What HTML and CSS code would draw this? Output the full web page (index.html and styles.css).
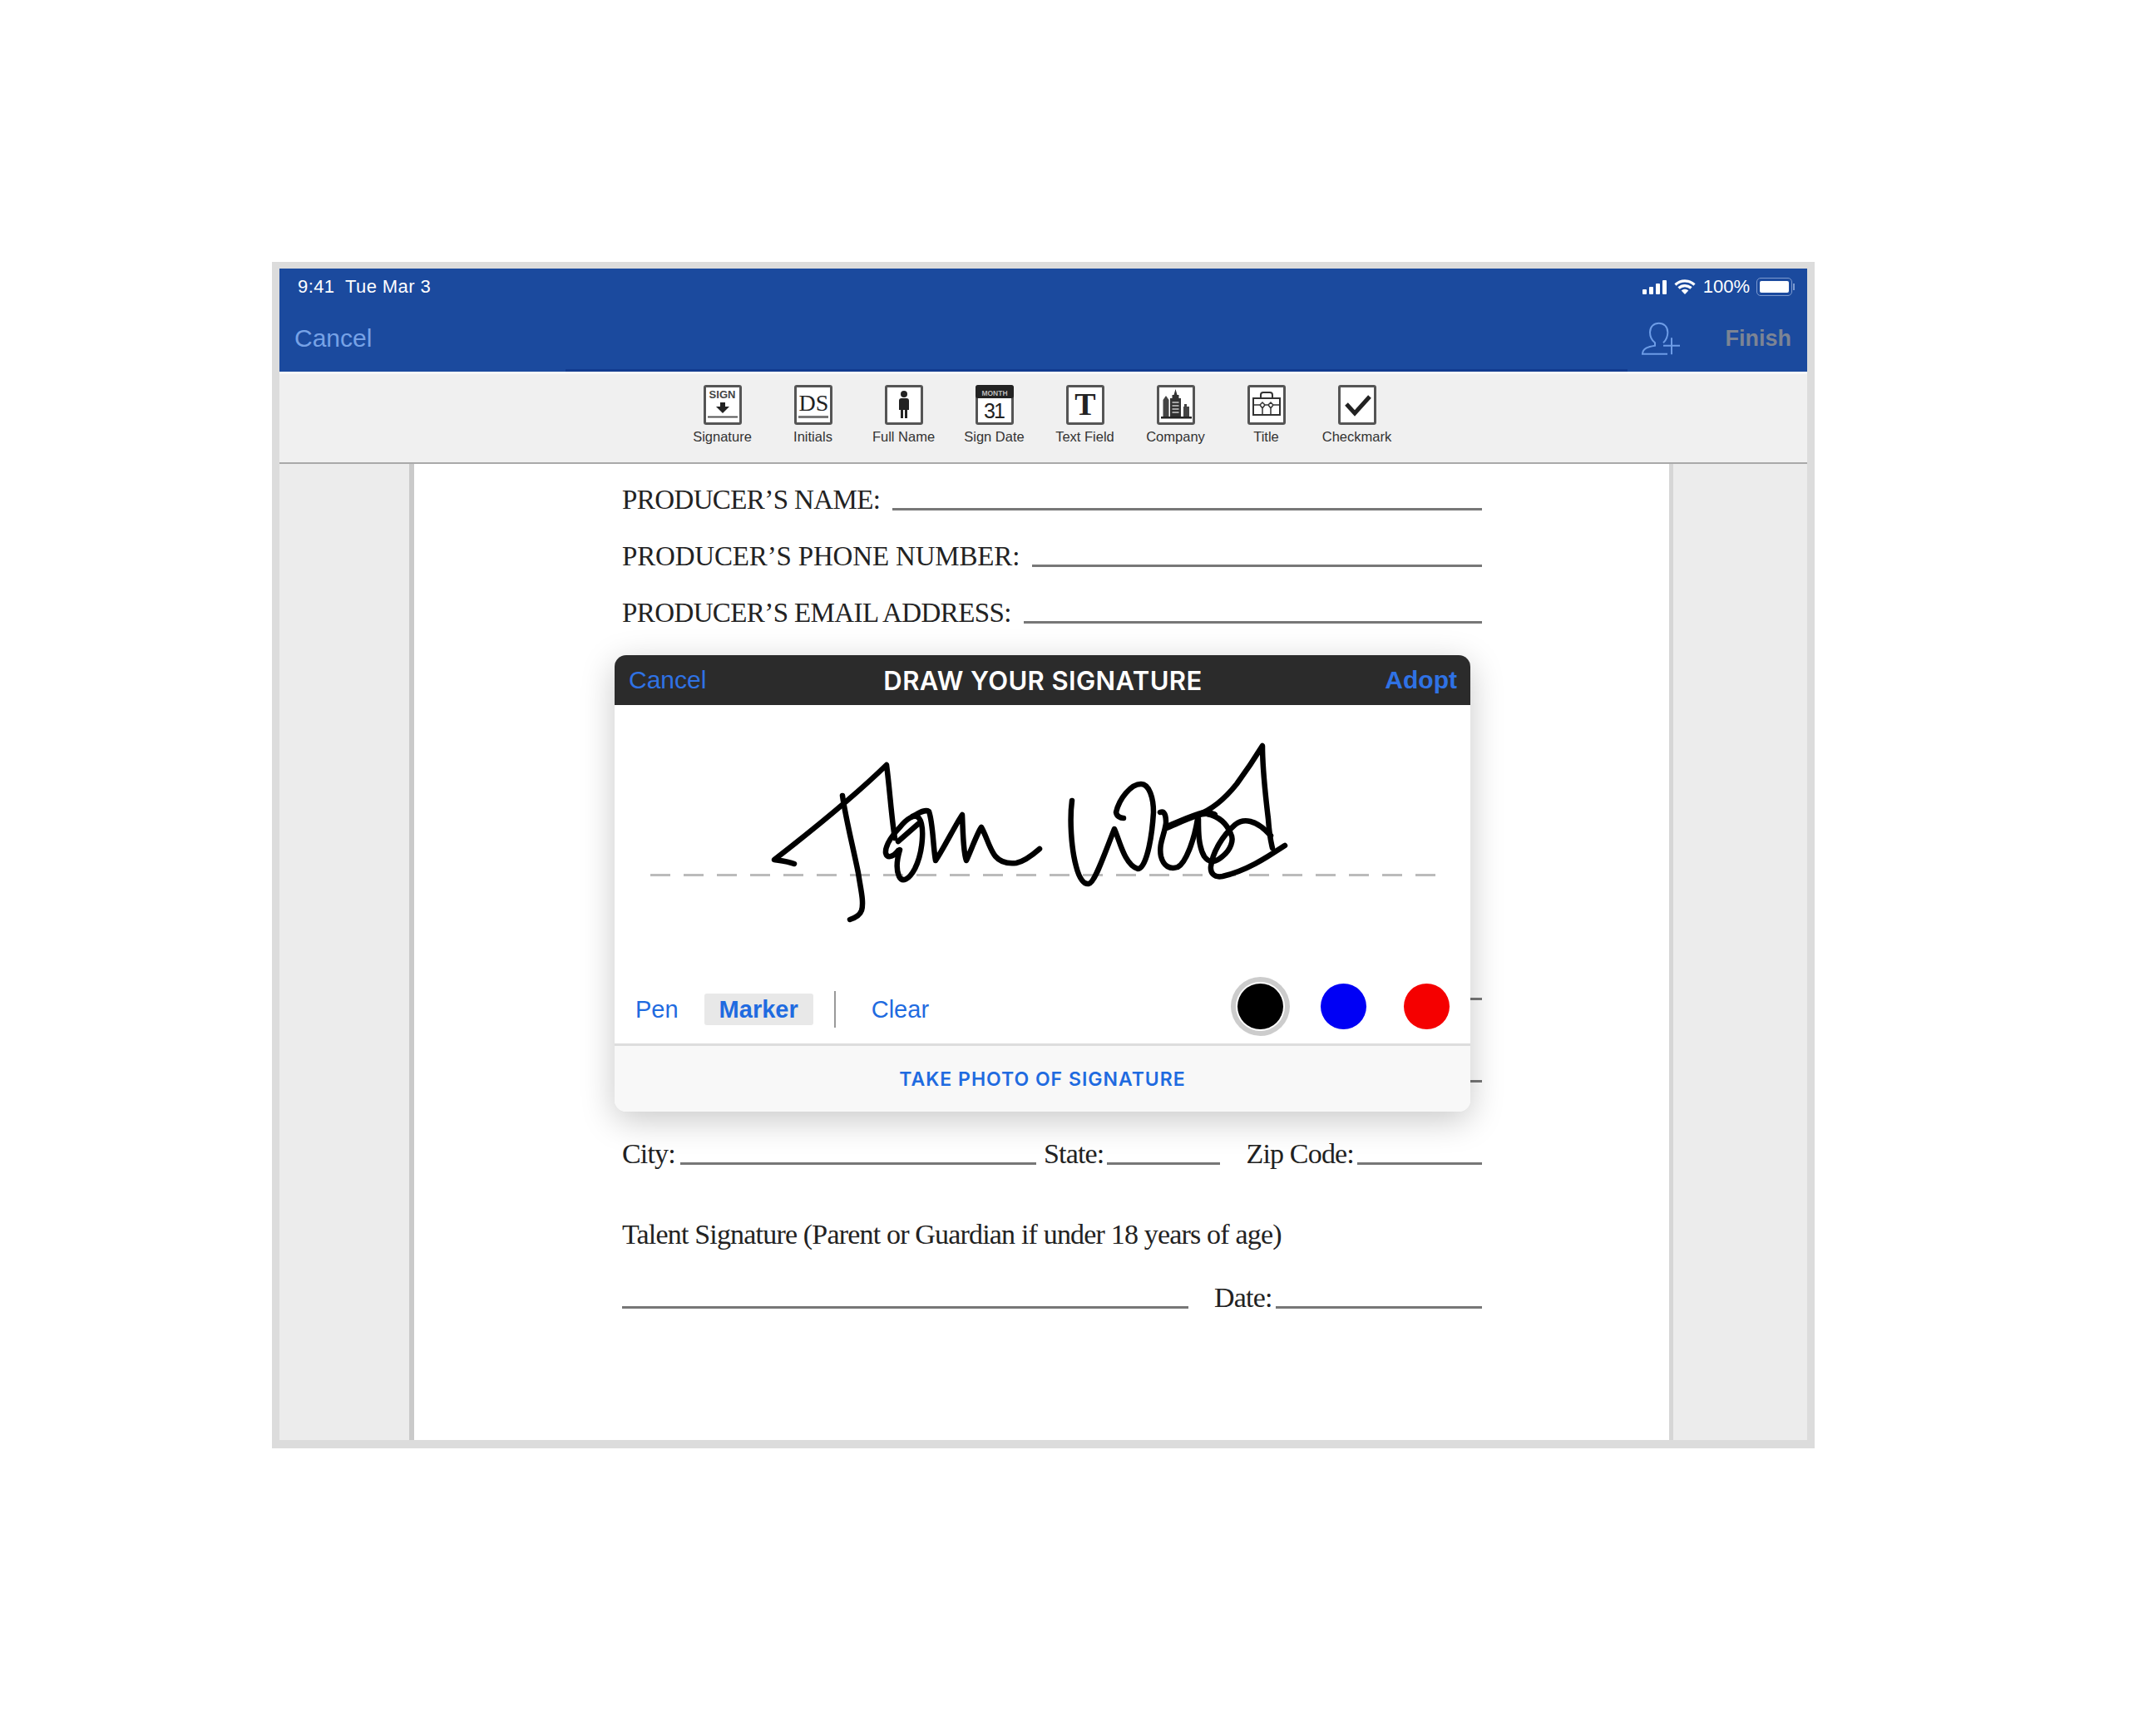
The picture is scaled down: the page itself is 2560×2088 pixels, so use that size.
FILE: index.html
```html
<!DOCTYPE html>
<html lang="en">
<head>
    <meta charset="UTF-8">
    <title>Draw your signature</title>
    <link rel="stylesheet" href="styles.css">
</head>
<body>
    <div class="device">
        <header class="topbar">
            <div class="status">
                <span class="status-time">9:41&nbsp; Tue Mar 3</span>
                <div class="status-right">
                    <svg class="signal" width="31" height="19" viewBox="0 0 31 19">
                        <rect x="1" y="12" width="5" height="6" rx="1"/>
                        <rect x="9" y="9" width="5" height="9" rx="1"/>
                        <rect x="17" y="5" width="5" height="13" rx="1"/>
                        <rect x="25" y="1" width="5" height="17" rx="1"/>
                    </svg>
                    <svg class="wifi" width="26" height="20" viewBox="0 0 26 20">
                        <path d="M1.5 7.5a16.5 16.5 0 0 1 23 0M5.5 11.5a11 11 0 0 1 15 0" fill="none" stroke="#fff" stroke-width="3.2"/>
                        <path d="M8.7 14.6a6.2 6.2 0 0 1 8.6 0L13 19z" fill="#fff"/>
                    </svg>
                    <span class="status-pct">100%</span>
                    <div class="battery"><div class="battery-fill"></div></div>
                </div>
            </div>
            <div class="nav">
                <span class="nav-cancel">Cancel</span>
                <div class="nav-right">
                    <svg class="add-user" width="52" height="44" viewBox="810 246 156 132">
                        <path d="M915 368H825C826 348 845 342 870 338V328C858 318 852 305 852 290C852 270 866 257 884 257C902 257 916 270 916 290C916 305 910 318 900 328M900 338H960M930 310V370"/>
                    </svg>
                    <span class="nav-finish">Finish</span>
                </div>
            </div>
        </header>

        <nav class="toolbar">
            <div class="tool">
                <svg class="tool-icon" viewBox="0 0 46 48">
                    <text x="22.500" y="16" class="i-small">SIGN</text>
                    <path d="M20 21h6v5h5l-8 8-8-8h5z" fill="#222"/>
                    <rect x="5" y="37.500" width="36" height="2" fill="#555"/>
                </svg>
                <span>Signature</span>
            </div>
            <div class="tool">
                <svg class="tool-icon" viewBox="0 0 46 48">
                    <text x="23.500" y="31" class="i-ds">DS</text>
                    <rect x="5" y="37" width="36" height="3" fill="#777"/>
                </svg>
                <span>Initials</span>
            </div>
            <div class="tool">
                <svg class="tool-icon" viewBox="0 0 46 48">
                    <circle cx="23" cy="11" r="4" fill="#222"/>
                    <path d="M17 19q0-3 3-3h6q3 0 3 3v11h-2v10h-3V30h-2v10h-3V30h-2z" fill="#222"/>
                </svg>
                <span>Full Name</span>
            </div>
            <div class="tool">
                <svg class="tool-icon" viewBox="0 0 46 48">
                    <rect x="0" y="0" width="46" height="16" rx="3" fill="#222"/>
                    <text x="23" y="13" class="i-month">MONTH</text>
                    <text x="22" y="40" class="i-day">31</text>
                </svg>
                <span>Sign Date</span>
            </div>
            <div class="tool">
                <svg class="tool-icon" viewBox="0 0 46 48">
                    <text x="23" y="36" class="i-t">T</text>
                </svg>
                <span>Text Field</span>
            </div>
            <div class="tool">
                <svg class="tool-icon" viewBox="0 0 46 48">
                    <path d="M22.500 5l2 7h2v4h2.500v23H16V16h2.500v-4h2z" fill="#333"/>
                    <path d="M11 13l3.500 5v21h-7V18zM33 23h3v3h3v13h-7V26h1z" fill="#444"/>
                    <path d="M18.500 21h8M18.500 25h8M18.500 29h8M18.500 33h8" stroke="#ccc" stroke-width="1.500"/>
                    <rect x="5" y="38" width="37" height="2.500" fill="#222"/>
                </svg>
                <span>Company</span>
            </div>
            <div class="tool">
                <svg class="tool-icon" viewBox="0 0 46 48">
                    <path d="M7 16h32v20H7zM16 16v-4q0-3 3-3h8q3 0 3 3v4" fill="none" stroke="#333" stroke-width="2"/>
                    <path d="M7 24h8M21 24h4M31 24h8M18 28v8M28 28v8M15 24l3-3 3 3-3 4zM25 24l3-3 3 3-3 4z" fill="none" stroke="#333" stroke-width="1.500"/>
                </svg>
                <span>Title</span>
            </div>
            <div class="tool">
                <svg class="tool-icon" viewBox="0 0 46 48">
                    <path d="M10 23l10 11L38 14" fill="none" stroke="#222" stroke-width="5"/>
                </svg>
                <span>Checkmark</span>
            </div>
        </nav>

        <main class="workspace">
            <div class="paper">
                <div class="row"><span class="label caps caps-name">PRODUCER’S NAME:</span><span class="rule"></span></div>
                <div class="row"><span class="label caps caps-phone">PRODUCER’S PHONE NUMBER:</span><span class="rule"></span></div>
                <div class="row row-last-top"><span class="label caps caps-email">PRODUCER’S EMAIL ADDRESS:</span><span class="rule"></span></div>
                <div class="row row-tall"><span class="label">&nbsp;</span><span class="rule"></span></div>
                <div class="row row-tall"><span class="label">&nbsp;</span><span class="rule"></span></div>
                <div class="row row-city">
                    <span class="label">City:</span><span class="rule rule-city"></span>
                    <span class="label">State:</span><span class="rule rule-state"></span>
                    <span class="label">Zip Code:</span><span class="rule rule-end"></span>
                </div>
                <div class="row row-talent"><span class="label">Talent Signature (Parent or Guardian if under 18 years of age)</span></div>
                <div class="row">
                    <span class="rule rule-sign"></span>
                    <span class="label">Date:</span><span class="rule rule-end"></span>
                </div>

                <section class="modal">
                    <div class="modal-head">
                        <span class="modal-cancel">Cancel</span>
                        <span class="modal-title">DRAW YOUR SIGNATURE</span>
                        <span class="modal-adopt">Adopt</span>
                    </div>
                    <div class="pad">
                        <div class="pad-line"></div>
                        <svg class="ink" width="640" height="225" viewBox="920 890 640 225">
                            <path d="M955 1039C948 1036 938 1035 931 1034C975 1000 1030 955 1066 920C1070 950 1072 985 1076 1008"/>
                            <path d="M1013 957C1017 985 1026 1020 1032 1050C1035 1070 1039 1085 1036 1095C1034 1101 1028 1104 1022 1106"/>
                            <path d="M1080 1023C1073 1032 1066 1032 1065 1026C1064 1016 1075 1002 1082 995C1090 985 1100 978 1105 984C1112 993 1110 1025 1100 1045C1093 1058 1085 1062 1081 1054C1077 1045 1079 1032 1082 1022M1080 1012L1104 991"/>
                            <path d="M1097 982C1105 978 1112 973 1117 976C1122 990 1122 1020 1125 1035C1135 1020 1150 990 1157 980C1158 1000 1158 1025 1162 1035C1168 1022 1175 1002 1180 995C1186 1005 1190 1022 1197 1030C1203 1037 1213 1039 1222 1038C1232 1036 1242 1028 1250 1021"/>
                            <path d="M1289 963C1286 985 1288 1020 1294 1042C1298 1058 1304 1064 1309 1063C1316 1062 1325 1035 1340 997C1346 1010 1352 1040 1368 1045C1378 1045 1385 1010 1387 977C1387 960 1382 943 1372 943C1360 943 1346 960 1342 977C1343 982 1347 984 1351 984"/>
                            <path d="M1395 977C1400 975 1402 980 1402 990C1400 1005 1393 1015 1396 1030C1399 1042 1407 1046 1416 1043C1426 1038 1436 1010 1440 985"/>
                            <path class="ink-heavy" d="M1403 995C1415 990 1425 985 1440 980C1448 977 1455 978 1460 980"/>
                            <path d="M1441 985C1441 1000 1441 1018 1448 1030C1455 1040 1463 1036 1470 1030C1480 1022 1484 1010 1480 1003C1475 990 1465 982 1452 979"/>
                            <path d="M1440 980C1460 973 1475 958 1487 943C1498 928 1510 910 1518 897C1518 925 1522 960 1525 985C1526 1000 1528 1012 1530 1020"/>
                            <path d="M1545 1017C1525 1030 1500 1047 1470 1054C1460 1056 1455 1050 1456 1042C1458 1025 1470 1005 1485 992C1495 984 1510 985 1528 1005"/>
                        </svg>
                    </div>
                    <div class="draw-tools">
                        <div class="pens">
                            <span class="pen">Pen</span>
                            <span class="pen pen-on">Marker</span>
                            <span class="pens-sep"></span>
                            <span class="pen">Clear</span>
                        </div>
                        <div class="colors">
                            <span class="color color-black color-on"></span>
                            <span class="color color-blue"></span>
                            <span class="color color-red"></span>
                        </div>
                    </div>
                    <div class="modal-foot">TAKE PHOTO OF SIGNATURE</div>
                </section>
            </div>
        </main>
    </div>
</body>
</html>
```

FILE: styles.css
```css
body {
    margin: 0;
    background: #fff;
    font-family: "Liberation Sans", Arial, sans-serif;
}

/* tablet frame */
.device {
    box-sizing: border-box;
    width: 1855px;
    height: 1427px;
    margin: 315px 0 0 327px;
    border: solid #dcdcdc;
    border-width: 8px 9px 10px 9px;
    display: flex;
    flex-direction: column;
}

/* blue bar */
.topbar {
    position: relative;
    height: 124px;
    background: #1b4a9e;
    flex: none;
}

.topbar::after {
    content: "";
    position: absolute;
    left: 344px;
    right: 216px;
    bottom: 0;
    height: 3px;
    background: #123b8f;
}

.status {
    height: 44px;
    padding: 0 14px 0 22px;
    display: flex;
    align-items: center;
    justify-content: space-between;
    color: #fff;
    font-size: 22px;
}

.status-time {
    letter-spacing: 0.4px;
}

.status-right {
    display: flex;
    align-items: center;
}

.signal {
    fill: #fff;
    margin-right: 8px;
}

.status-pct {
    margin: 0 8px 0 9px;
}

.battery {
    position: relative;
    box-sizing: border-box;
    width: 43px;
    height: 22px;
    padding: 3px;
    border: 1px solid #7e9bd0;
    border-radius: 5px;
    margin-right: 4px;
}

.battery::after {
    content: "";
    position: absolute;
    right: -4px;
    top: 6px;
    width: 2px;
    height: 8px;
    background: #7e9bd0;
}

.battery-fill {
    height: 100%;
    background: #fff;
    border-radius: 2px;
}

.nav {
    height: 80px;
    padding: 0 19px 0 18px;
    display: flex;
    align-items: center;
    justify-content: space-between;
}

.nav-cancel {
    color: #77a2e6;
    font-size: 30px;
}

.nav-right {
    display: flex;
    align-items: center;
}

.add-user {
    margin-right: 53px;
}

.add-user path {
    fill: none;
    stroke: #6d9ce6;
    stroke-width: 6;
}

.nav-finish {
    color: #7c8494;
    font-size: 27px;
    font-weight: 700;
}

/* tools row */
.toolbar {
    box-sizing: border-box;
    height: 111px;
    flex: none;
    padding: 13px 9px 0 0;
    background: #f0f0f0;
    border-top: 3px solid #f8f8f8;
    border-bottom: 2px solid #a9a9a9;
    display: flex;
    justify-content: center;
}

.tool {
    width: 109px;
    display: flex;
    flex-direction: column;
    align-items: center;
    color: #333;
    font-size: 16.500px;
    line-height: 20px;
}

.tool span {
    margin-top: 4px;
    white-space: nowrap;
}

.tool-icon {
    width: 46px;
    height: 48px;
    background: #fff;
    box-shadow: inset 0 0 0 3px #555;
    border-radius: 3px;
}

.i-small {
    font: 700 13px "Liberation Sans", sans-serif;
    fill: #444;
    text-anchor: middle;
}

.i-ds {
    font: 28px "Liberation Serif", serif;
    fill: #222;
    text-anchor: middle;
}

.i-month {
    font: 700 8.500px "Liberation Sans", sans-serif;
    fill: #bbb;
    text-anchor: middle;
}

.i-day {
    font: 25px "Liberation Sans", sans-serif;
    letter-spacing: -2px;
    fill: #222;
    text-anchor: middle;
}

.i-t {
    font: 700 38px "Liberation Serif", serif;
    fill: #222;
    text-anchor: middle;
}

/* document area */
.workspace {
    flex: 1;
    background: #ececec;
    min-height: 0;
}

.paper {
    position: relative;
    box-sizing: border-box;
    width: 1520px;
    height: 100%;
    margin-left: 156px;
    padding: 23px 225px 0 250px;
    background: #fff;
    border-left: 6px solid #cacaca;
    border-right: 5px solid #d6d6d6;
    color: #222;
    font-family: "Liberation Serif", serif;
    font-size: 34px;
    line-height: 40px;
}

.row {
    height: 68px;
    display: flex;
    align-items: baseline;
}

.row-last-top {
    margin-bottom: 385px;
}

.row-tall {
    height: 99px;
}

.row-city {
    height: 97px;
}

.row-talent {
    height: 76px;
}

.label {
    white-space: nowrap;
    letter-spacing: -0.82px;
}

.caps {
    font-size: 33px;
    letter-spacing: -0.6px;
    margin-right: 15px;
}

.caps-phone {
    letter-spacing: -0.17px;
}

.rule {
    flex: 1;
    border-bottom: 3px solid #777;
    transform: translateY(2px);
}

.rule-city {
    flex: none;
    width: 428px;
    margin: 0 9px 0 6px;
}

.rule-state {
    flex: none;
    width: 136px;
    margin: 0 31px 0 4px;
}

.rule-sign {
    flex: none;
    width: 681px;
    margin-right: 31px;
}

.rule-end {
    margin-left: 4px;
}

/* signature dialog */
.modal {
    position: absolute;
    left: 241px;
    top: 230px;
    width: 1029px;
    height: 549px;
    background: #fff;
    border-radius: 14px;
    box-shadow: 0 10px 40px rgba(0, 0, 0, 0.22);
    overflow: hidden;
    display: flex;
    flex-direction: column;
    font-family: "Liberation Sans", Arial, sans-serif;
    line-height: normal;
}

.modal-head {
    height: 60px;
    flex: none;
    padding: 0 16px 0 17px;
    background: #2b2b2b;
    display: grid;
    grid-template-columns: 1fr auto 1fr;
    align-items: center;
    font-size: 30px;
}

.modal-cancel {
    color: #2f72e4;
}

.modal-title {
    color: #fff;
    font-family: Inter, sans-serif;
    font-size: 31px;
    font-weight: 600;
    letter-spacing: 0.4px;
}

.modal-adopt {
    color: #2f72e4;
    font-weight: 700;
    text-align: right;
}

.pad {
    position: relative;
    height: 312px;
    flex: none;
}

.pad-line {
    position: absolute;
    left: 43px;
    top: 203px;
    width: 944px;
    height: 3px;
    background: repeating-linear-gradient(90deg, #bbb 0 24px, transparent 24px 40px);
}

.ink {
    position: absolute;
    left: 181px;
    top: 42px;
}

.ink path {
    fill: none;
    stroke: #000;
    stroke-width: 6.500px;
    stroke-linecap: round;
    stroke-linejoin: round;
}

.ink .ink-heavy {
    stroke-width: 8px;
}

.draw-tools {
    flex: 1;
    display: flex;
    align-items: flex-start;
    justify-content: space-between;
    padding-right: 25px;
}

.pens {
    display: flex;
    align-items: center;
    margin-top: 32px;
    padding-left: 25px;
    height: 44px;
    font-size: 29px;
    color: #1f6be0;
}

.pen-on {
    margin-left: 31px;
    padding: 0 18px;
    height: 38px;
    line-height: 38px;
    background: #e8e8e8;
    border-radius: 3px;
    font-weight: 700;
}

.pens-sep {
    width: 2px;
    height: 44px;
    margin: 0 43px 0 25px;
    background: #999;
}

.colors {
    display: flex;
    gap: 45px;
    margin-top: 23px;
}

.color {
    width: 55px;
    height: 55px;
    border-radius: 50%;
}

.color-on {
    box-shadow: 0 0 0 2px #fff, 0 0 0 8px #ccc;
}

.color-black {
    background: #000;
}

.color-blue {
    background: #0000f5;
}

.color-red {
    background: #f50000;
}

.modal-foot {
    box-sizing: border-box;
    height: 82px;
    flex: none;
    background: #f8f8f8;
    border-top: 3px solid #ddd;
    display: flex;
    align-items: center;
    justify-content: center;
    color: #1f6be0;
    font-family: Inter, sans-serif;
    font-size: 23px;
    font-weight: 600;
    letter-spacing: 1px;
}
```
